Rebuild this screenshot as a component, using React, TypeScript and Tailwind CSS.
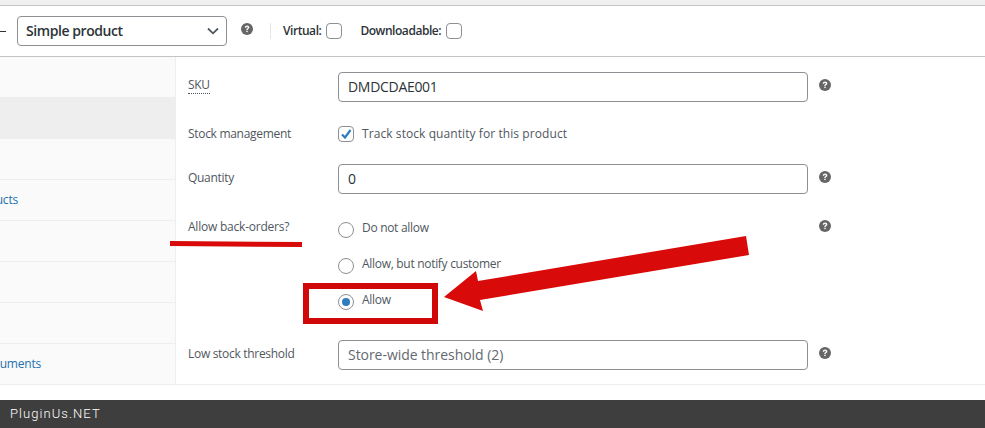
const font = "font-['Open_Sans','Noto_Sans',sans-serif]";

const HelpIcon = ({ className = "" }: { className?: string }) => (
    <svg viewBox="0 0 12 12" className={`w-3 h-3 shrink-0 ${className}`}>
        <circle cx="6" cy="6" r="6" fill="#666666" />
        <path
            d="M3.800 4.700c0-1.300 1-2.100 2.300-2.100 1.300 0 2.200.8 2.200 1.800 0 .9-.5 1.300-1.100 1.600-.4.3-.5.4-.5.9H5.300c0-.8.2-1.200.7-1.500.5-.3.8-.5.8-.9 0-.4-.3-.7-.8-.7-.5 0-.8.300-.8.900H3.800z"
            fill="#ffffff"
        />
        <rect x="5.300" y="7.700" width="1.400" height="1.400" fill="#ffffff" />
    </svg>
);

const Radio = ({ label, checked = false }: { label: string; checked?: boolean }) => (
    <label className="flex items-start gap-2 h-4">
        <span className="mt-[2px] w-4 h-4 rounded-full border border-[#8c8f94] bg-white flex items-center justify-center shrink-0">
            {checked && <span className="w-2 h-2 rounded-full bg-[#2f7dbd]" />}
        </span>
        <span className="text-xs leading-4 tracking-[-0.3px] text-[#50575e]">{label}</span>
    </label>
);

const TextRow = ({ label, value, muted = false, dotted = false }: { label: string; value: string; muted?: boolean; dotted?: boolean }) => (
    <div className="flex items-start">
        <div className={`w-[150px] shrink-0 text-xs leading-4 tracking-[-0.3px] text-[#50575e] ${dotted ? "pt-[5px]" : "pt-[6px]"}`}>
            <span className={dotted ? "border-b border-dotted border-[#50575e]" : ""}>{label}</span>
        </div>
        <div className={`w-[470px] h-[30px] rounded border border-[#8c8f94] bg-white px-[9px] text-sm leading-[28px] ${muted ? "text-[#646970] tracking-[-0.05px]" : "text-[#2c3338] tracking-[-0.3px]"}`}>
            {value}
        </div>
        <HelpIcon className="ml-[11px] mt-[7px]" />
    </div>
);

const SideRow = ({ text = "", active = false, tall = false, right = "" }: { text?: string; active?: boolean; tall?: boolean; right?: string }) => (
    <div className={`border-b flex items-center justify-end text-xs text-[#2271b1] tracking-[-0.2px] whitespace-nowrap ${tall ? "h-[42px] border-[#eeeeee]" : "h-[41px] border-[#eeeeee]"} ${active ? "bg-[#eeeeee]" : ""} ${right}`}>
        {text}
    </div>
);

export default function App() {
    return (
        <div className={`relative w-[985px] h-[428px] overflow-hidden bg-white ${font}`}>
            {/* Page strip above the metabox */}
            <div className="h-[6px] bg-[#f0f0f0] border-b border-[#c3c4c7]" />

            {/* Product type bar */}
            <div className="h-[51px] border-b border-[#c3c4c7] flex items-center">
                <div className="w-[6px] h-px bg-[#2c3338]" />
                <div className="ml-[11px] w-[210px] h-[30px] rounded border border-[#8c8f94] flex items-center justify-between pl-2 pr-[7px] text-sm font-semibold tracking-[-0.43px] text-[#2c3338]">
                    Simple product
                    <svg viewBox="0 0 12 8" className="w-3 h-2" fill="none" stroke="#50575e" strokeWidth="1.800">
                        <path d="M1 1.500 6 6.300 11 1.500" />
                    </svg>
                </div>
                <HelpIcon className="ml-[14px] -mt-[5px]" />
                <div className="ml-[17px] w-px h-4 bg-[#e5e5e5]" />
                <div className="ml-3 text-xs font-semibold tracking-[-0.45px] text-[#2c3338]">Virtual:</div>
                <div className="ml-[5px] w-4 h-4 rounded border border-[#8c8f94]" />
                <div className="ml-[18px] text-xs font-semibold tracking-[-0.45px] text-[#2c3338]">Downloadable:</div>
                <div className="ml-[5px] w-4 h-4 rounded border border-[#8c8f94]" />
            </div>

            <div className="flex h-[328px] border-b border-[#eeeeee]">
                {/* Tabs column */}
                <div className="w-[176px] shrink-0 bg-[#fafafa] border-r border-[#eeeeee] overflow-hidden">
                    <div className="h-10" />
                    <SideRow active tall />
                    <SideRow />
                    <SideRow text="ucts" right="pr-[157px]" />
                    <SideRow />
                    <SideRow />
                    <SideRow />
                    <SideRow text="uments" right="pr-[134px]" />
                </div>

                {/* Inventory fields */}
                <div className="flex-1 pl-3 pt-[15px]">
                    <TextRow label="SKU" value="DMDCDAE001" dotted />
                    <div className="flex items-center mt-[22px] h-5">
                        <div className="w-[150px] shrink-0 text-xs tracking-[-0.3px] text-[#50575e]">Stock management</div>
                        <div className="w-4 h-4 rounded border border-[#8c8f94] flex items-center justify-center">
                            <svg viewBox="0 0 12 12" className="w-3 h-3" fill="none" stroke="#2f7dbd" strokeWidth="2.200">
                                <path d="M2 6.500 5 9.500 10.500 2" />
                            </svg>
                        </div>
                        <span className="ml-2 text-xs tracking-[0.08px] text-[#50575e]">Track stock quantity for this product</span>
                    </div>
                    <div className="mt-5">
                        <TextRow label="Quantity" value="0" />
                    </div>
                    <div className="flex items-start mt-[25px] h-[96px]">
                        <div className="w-[150px] shrink-0 text-xs leading-4 tracking-[-0.22px] text-[#50575e]">Allow back-orders?</div>
                        <div className="w-[470px] flex flex-col gap-5 pt-px">
                            <Radio label="Do not allow" />
                            <Radio label="Allow, but notify customer" />
                            <Radio label="Allow" checked />
                        </div>
                        <HelpIcon className="ml-[11px] mt-px" />
                    </div>
                    <div className="mt-[25px]">
                        <TextRow label="Low stock threshold" value="Store-wide threshold (2)" muted />
                    </div>
                </div>
            </div>

            {/* Red annotations drawn over the screenshot */}
            <svg className="absolute left-0 top-0 pointer-events-none" width="985" height="428" viewBox="0 0 985 428">
                <polygon points="170,241 302,242 302,247 170,246" fill="#d80a0a" />
                <polygon points="444,297 476,271 478,281 746,236 749,255 480,300 483,311" fill="#d80a0a" />
            </svg>
            <div className="absolute left-[303px] top-[283px] w-[135px] h-[41px] border-[6px] border-[#d00808]" />

            <div className="absolute left-0 right-0 bottom-0 h-7 bg-[#3e3e3e] flex items-center pl-[10px] text-[13px] tracking-[1.05px] font-light text-white font-['Roboto',sans-serif]">
                PluginUs.NET
            </div>
        </div>
    );
}
